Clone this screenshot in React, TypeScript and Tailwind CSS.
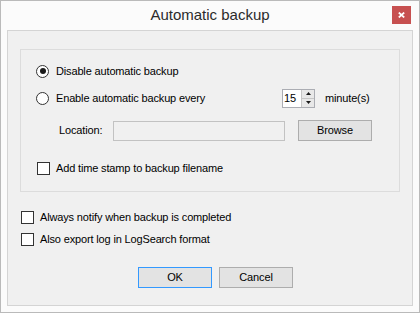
import React from 'react';

const Radio: React.FC<{ checked?: boolean }> = ({ checked }) => (
  <div className="w-[13px] h-[13px] shrink-0 rounded-full border border-[#333333] bg-white flex items-center justify-center">
    {checked && <div className="w-[6px] h-[6px] rounded-full bg-[#1a1a1a]" />}
  </div>
);

const Checkbox: React.FC = () => (
  <div className="w-[13px] h-[13px] shrink-0 border border-[#333333] bg-white" />
);

const Spinner: React.FC = () => (
  <div className="w-[33px] h-[19px] border border-[#abadb3] bg-white flex">
    <div className="flex-1 pl-[1px] leading-[17px]">15</div>
    <div className="w-[13px] flex flex-col border-l border-[#c6c6c6]">
      <div className="h-[9px] bg-[#e8e8e8] border-b border-[#c6c6c6] flex items-center justify-center">
        <svg width="5" height="3" viewBox="0 0 5 3">
          <path d="M2.5 0 L5 3 L0 3 Z" fill="#1a1a1a" />
        </svg>
      </div>
      <div className="flex-1 bg-[#e8e8e8] flex items-center justify-center">
        <svg width="5" height="3" viewBox="0 0 5 3">
          <path d="M0 0 L5 0 L2.5 3 Z" fill="#1a1a1a" />
        </svg>
      </div>
    </div>
  </div>
);

const App: React.FC = () => {
  return (
    <div className="w-[420px] h-[313px] border border-[#bababa] bg-[#fbfbfb] flex flex-col font-['Liberation_Sans',Arial,sans-serif] text-[11px] tracking-[-0.15px] text-black">
      {/* Title bar */}
      <div className="relative h-[29px] shrink-0 flex items-center justify-center text-[15px] tracking-normal text-[#2b2b2b]">
        Automatic backup
        <div className="absolute right-[8px] top-[5px] w-[19px] h-[18px] bg-[#c75050] flex items-center justify-center">
          <svg width="7" height="6" viewBox="0 0 7 6">
            <path d="M0.8 0.6 L6.2 5.4 M6.2 0.6 L0.8 5.4" stroke="#ffffff" strokeWidth="1.8" />
          </svg>
        </div>
      </div>

      {/* Client area */}
      <div className="mx-[6px] h-[276px] shrink-0 border border-[#d4d4d4] bg-[#f0f0f0] px-[12px] pt-[18px]">
        {/* Group box */}
        <div className="h-[143px] border border-[#dcdcdc] pl-[15px]">
          <div className="mt-[11px] h-[20px] flex items-center">
            <Radio checked />
            <span className="ml-[7px] leading-[13px]">Disable automatic backup</span>
          </div>

          <div className="mt-[7px] h-[20px] flex items-center">
            <div className="w-[246px] flex items-center">
              <Radio />
              <span className="ml-[7px] leading-[13px]">Enable automatic backup every</span>
            </div>
            <Spinner />
            <span className="ml-[10px] leading-[13px]">minute(s)</span>
          </div>

          <div className="mt-[12px] h-[21px] flex items-start">
            <span className="ml-[23px] w-[54px] h-[21px] leading-[21px]">Location:</span>
            <div className="mt-[1px] w-[172px] h-[20px] border border-[#c2c2c2] bg-[#f0f0f0]" />
            <button className="ml-[13px] w-[74px] h-[21px] border border-[#adadad] bg-[#e3e3e3] leading-[19px] text-center">
              Browse
            </button>
          </div>

          <div className="mt-[17px] h-[20px] flex items-center ml-[1px]">
            <Checkbox />
            <span className="ml-[6px] leading-[13px]">Add time stamp to backup filename</span>
          </div>
        </div>

        <div className="pl-[1px]">
          <div className="mt-[15px] h-[20px] flex items-center">
            <Checkbox />
            <span className="ml-[6px] leading-[13px]">Always notify when backup is completed</span>
          </div>
          <div className="mt-[2px] h-[20px] flex items-center">
            <Checkbox />
            <span className="ml-[6px] leading-[13px]">Also export log in LogSearch format</span>
          </div>
        </div>

        <div className="mt-[18px] ml-[118px] flex gap-[7px]">
          <button className="w-[74px] h-[21px] border border-[#3399ff] bg-[#e3e3e3] leading-[19px] text-center">
            OK
          </button>
          <button className="w-[74px] h-[21px] border border-[#adadad] bg-[#e3e3e3] leading-[19px] text-center">
            Cancel
          </button>
        </div>
      </div>
    </div>
  );
};

export default App;
